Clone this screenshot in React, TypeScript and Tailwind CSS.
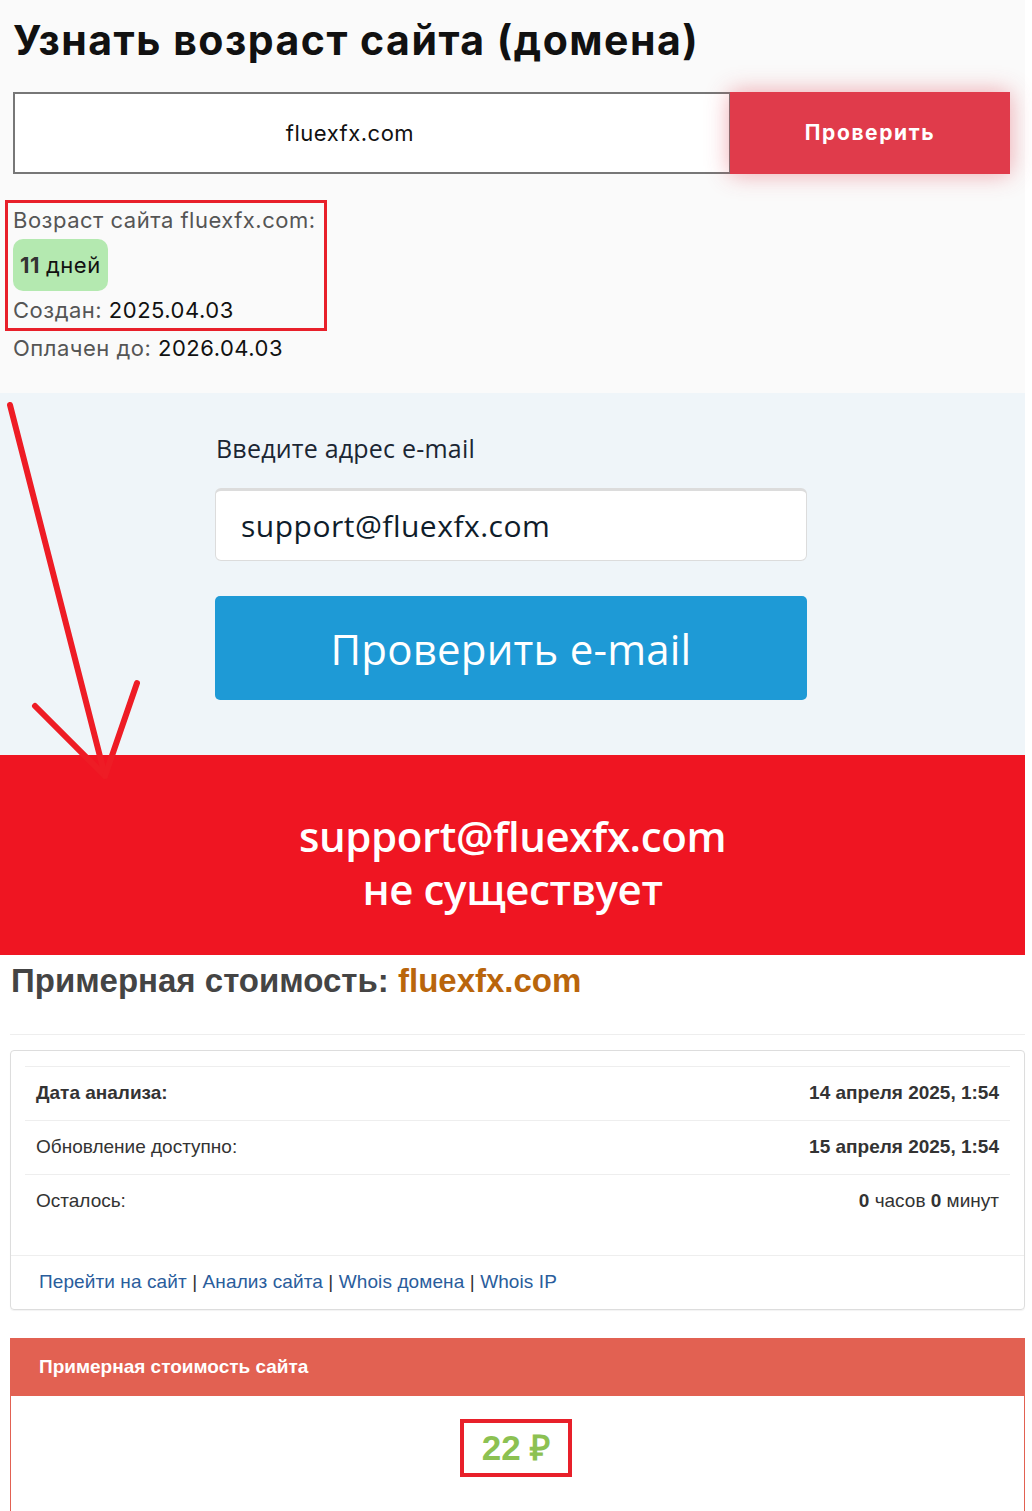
import React from 'react';

const ROWS = [
  { label: 'Дата анализа:', value: '14 апреля 2025, 1:54', bold: true },
  { label: 'Обновление доступно:', value: '15 апреля 2025, 1:54', bold: false },
];

const LINKS = ['Перейти на сайт', 'Анализ сайта', 'Whois домена', 'Whois IP'];

function Arrow() {
  return (
    <svg className="absolute left-0 top-0 pointer-events-none" width="160" height="800" viewBox="0 0 160 800">
      <g stroke="#ee1c25" strokeWidth="6" strokeLinecap="round" fill="none">
        <path d="M10 405 L105 776" />
        <path d="M35 706 L105 776" />
        <path d="M137 683 L105 776" />
      </g>
    </svg>
  );
}

export default function App() {
  return (
    <div className="relative w-[1032px] min-h-[1511px] bg-white overflow-hidden">
      <div className="w-[1025px]">
        {/* domain age */}
        <section className="h-[393px] bg-[#fafafa] font-['Inter',sans-serif]">
          <h1 className="pl-[13px] pt-[15px] text-[41px] leading-[50px] font-bold text-[#111] tracking-[1.5px] whitespace-nowrap">
            Узнать возраст сайта (домена)
          </h1>
          <div className="flex mt-[27px] pl-[13px]">
            <div className="w-[718px] h-[82px] border-2 border-[#777] bg-white flex items-center justify-center pr-[44px]">
              <span className="text-[22px] tracking-[0.5px] text-[#111]">fluexfx.com</span>
            </div>
            <button className="w-[280px] h-[82px] -ml-px bg-[#e03b4b] text-white text-[21px] tracking-[1.6px] font-bold shadow-[0_0_22px_rgba(224,59,75,0.45)]">
              Проверить
            </button>
          </div>
          <div className="ml-[5px] mt-[26px] w-[322px] h-[131px] border-[3px] border-[#e8202a] pl-[5px] pt-[3px] text-[22px] tracking-[0.5px]">
            <div className="leading-[28px] text-[#555]">Возраст сайта fluexfx.com:</div>
            <div className="mt-[5px] inline-flex items-center h-[52px] px-[7px] rounded-[10px] bg-[#b4e9b0] text-[#111]">
              <span className="font-bold text-[#333] mr-[6px]">11</span>дней
            </div>
            <div className="mt-[5px] leading-[28px] text-[#555]">
              Создан: <span className="text-[#111]">2025.04.03</span>
            </div>
          </div>
          <div className="pl-[13px] mt-[3px] text-[22px] tracking-[0.5px] leading-[28px] text-[#555]">
            Оплачен до: <span className="text-[#111]">2026.04.03</span>
          </div>
        </section>

        {/* email check */}
        <section className="h-[362px] bg-[#eff5f9] font-['Open_Sans',sans-serif]">
          <div className="w-[592px] ml-[215px] pt-[39px]">
            <div className="pl-px text-[25px] leading-[32px] text-[#1b2633] tracking-[0.2px]">Введите адрес e-mail</div>
            <div className="mt-[24px] h-[73px] rounded-[6px] bg-white border border-[#dcdcdc] border-t-[3px] flex items-center pl-[25px]">
              <span className="text-[30px] text-[#0f1d2b] tracking-[0.5px]">support@fluexfx.com</span>
            </div>
            <button className="mt-[35px] w-full h-[104px] rounded-[5px] bg-[#1e9ad6] text-white text-[42px] tracking-[0.2px]">
              Проверить e-mail
            </button>
          </div>
        </section>

        {/* result banner */}
        <section className="h-[200px] bg-[#ef1522] flex flex-col items-center justify-center pt-[14px] font-['Open_Sans',sans-serif] font-semibold text-white text-[42px] leading-[53px] tracking-[-0.4px]">
          <div>support@fluexfx.com</div>
          <div>не существует</div>
        </section>

        {/* cost */}
        <section className="bg-white font-['Liberation_Sans',Arial,sans-serif] pl-[10px]">
          <h2 className="pl-px pt-[7px] text-[33px] leading-[38px] font-bold text-[#444]">
            Примерная стоимость: <span className="text-[#b9650b]">fluexfx.com</span>
          </h2>
          <hr className="mt-[34px] border-0 border-t border-[#eee]" />
          <div className="mt-[15px] border border-[#ddd] rounded-[4px] shadow-[0_1px_1px_rgba(0,0,0,0.05)]">
            <div className="px-[14px] pt-[15px] pb-[27px]">
              {ROWS.map(r => (
                <div key={r.label} className="flex justify-between items-center h-[54px] border-t border-[#eee] px-[11px] text-[19px] text-[#333]">
                  <span className={r.bold ? 'font-bold' : ''}>{r.label}</span>
                  <span className="font-bold">{r.value}</span>
                </div>
              ))}
              <div className="flex justify-between items-center h-[54px] border-t border-[#eee] px-[11px] text-[19px] text-[#333]">
                <span>Осталось:</span>
                <span>
                  <b>0</b> часов <b>0</b> минут
                </span>
              </div>
            </div>
            <div className="h-[54px] border-t border-[#eee] pl-[28px] text-[19px] leading-[52px] text-[#2a5d9c] tracking-[0.1px]">
              {LINKS.map((l, i) => (
                <React.Fragment key={l}>
                  {i > 0 && <span className="text-[#333]">{' | '}</span>}
                  <a href="#">{l}</a>
                </React.Fragment>
              ))}
            </div>
          </div>

          <div className="mt-[28px] border border-[#e26152] border-b-0">
            <div className="h-[57px] bg-[#e26152] flex items-center pl-[28px] text-white text-[19px] font-bold">
              Примерная стоимость сайта
            </div>
            <div className="h-[140px] flex justify-center pt-[23px]">
              <div className="ml-[-3px] w-[112px] h-[58px] border-[4px] border-[#e8202a] flex items-center justify-center text-[#8cc152] text-[35px] font-bold">
                22 ₽
              </div>
            </div>
          </div>
        </section>
      </div>
      <Arrow />
    </div>
  );
}
